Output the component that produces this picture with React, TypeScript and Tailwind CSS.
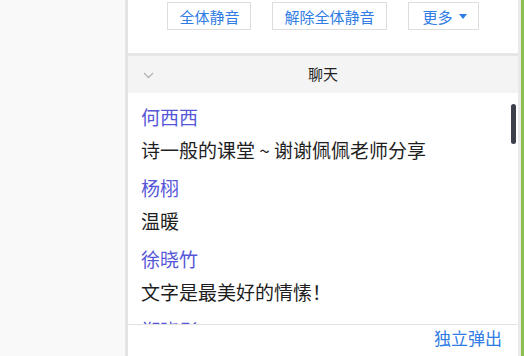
import React from 'react';

const messages = [
    { name: '何西西', text: '诗一般的课堂 ~ 谢谢佩佩老师分享' },
    { name: '杨栩', text: '温暖' },
    { name: '徐晓竹', text: '文字是最美好的情愫！' },
    { name: '郑晓彤', text: '谢谢老师' },
];

const font = { fontFamily: '"Noto Sans CJK SC", "Noto Sans", sans-serif' };

const ToolButton = ({ children }: { children: React.ReactNode }) => (
    <button className="h-[28px] px-[11px] flex items-center gap-[6px] border border-[#dedede] bg-white text-[15px] text-[#2f7ce4] leading-none">
        {children}
    </button>
);

const App = () => {
    return (
        <div className="w-[524px] h-[356px] overflow-hidden flex bg-white" style={font}>
            <div className="w-[128px] shrink-0 bg-[#f9f9f9] border-r-[3px] border-[#e4e4e4]" />
            <div className="w-[390px] shrink-0 flex flex-col">
                <div className="h-[53px] shrink-0 flex justify-center gap-[21px] pt-[2px]">
                    <ToolButton>全体静音</ToolButton>
                    <ToolButton>解除全体静音</ToolButton>
                    <ToolButton>
                        <span className="pl-[3px]">更多</span>
                        <svg width="8" height="5" viewBox="0 0 8 5"><path d="M0 0h8L4 5z" fill="#2f7ce4" /></svg>
                    </ToolButton>
                </div>
                <div className="h-[3px] shrink-0 bg-[#e6e6e6]" />
                <div className="h-[37px] shrink-0 bg-[#f4f4f4] relative flex items-center justify-center text-[15px] text-[#222]">
                    <svg className="absolute left-[15px] top-[16px]" width="11" height="7" viewBox="0 0 11 7">
                        <path d="M1 1l4.5 4.5L10 1" fill="none" stroke="#b4b4b4" strokeWidth="1.3" />
                    </svg>
                    聊天
                </div>
                <div className="h-[231px] shrink-0 relative overflow-hidden pt-[10px] pl-[13px]">
                    {messages.map((m) => (
                        <div key={m.name} className="mb-[10px]">
                            <div className="text-[19px] leading-[28px] text-[#5657d8]">{m.name}</div>
                            <div className="mt-[5px] text-[19px] leading-[28px] text-[#1e1e1e]">{m.text}</div>
                        </div>
                    ))}
                    <div className="absolute left-[383px] top-[11px] w-[5px] h-[40px] rounded-full bg-[#3d3f4a]" />
                </div>
                <div className="border-t border-[#e2e2e2] h-[60px] shrink-0">
                    <div className="flex justify-end pr-[16px] text-[17px] leading-[26px] text-[#2f7ce4]">独立弹出</div>
                    <div className="pl-[13px] text-[17px] leading-[22px] mt-[2px] text-[#c8c8c8]">请输入消息...</div>
                </div>
            </div>
            <div className="w-[3px] shrink-0 bg-[#e9e9e9]" />
            <div className="w-[3px] shrink-0 bg-[#8dbf4e]" />
        </div>
    );
};

export default App;
